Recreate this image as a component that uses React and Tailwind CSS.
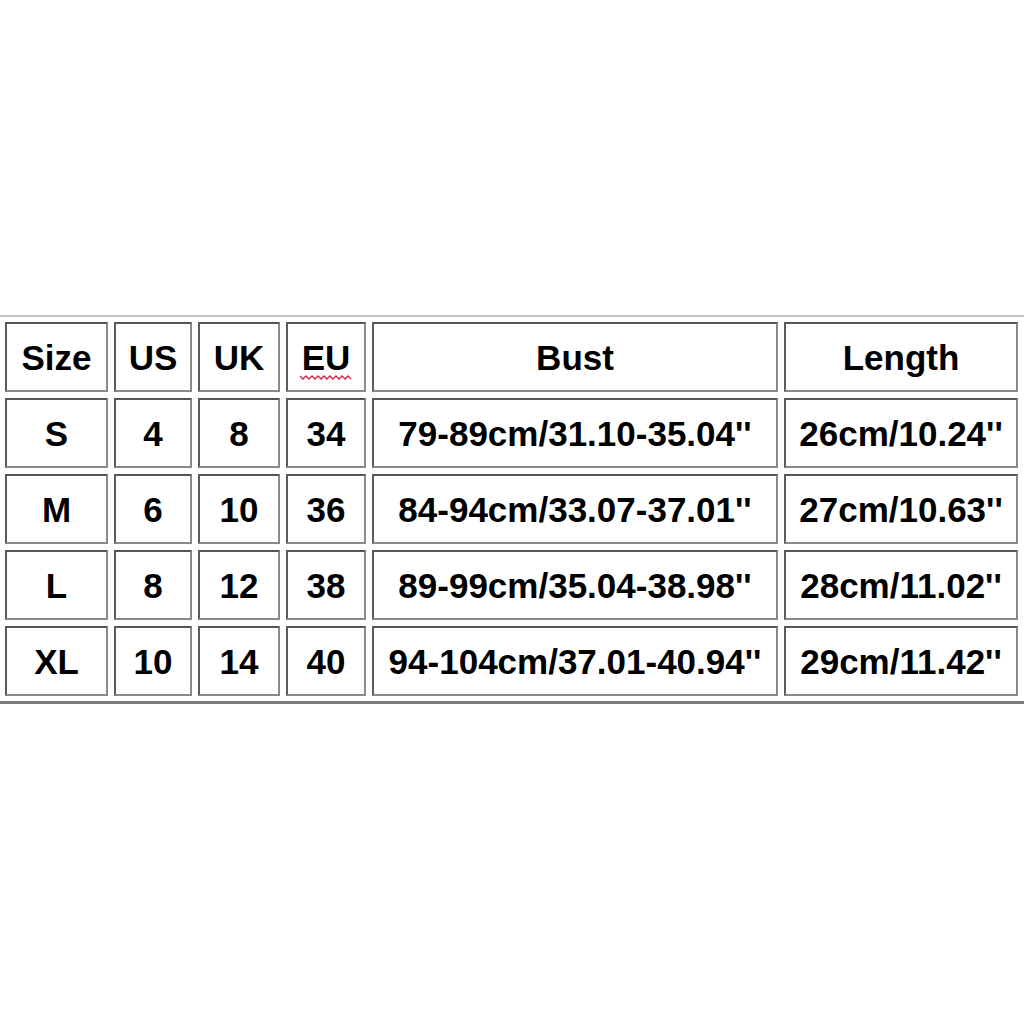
const header = ['Size', 'US', 'UK', 'EU', 'Bust', 'Length'];

const rows = [
  ['S', '4', '8', '34', "79-89cm/31.10-35.04''", "26cm/10.24''"],
  ['M', '6', '10', '36', "84-94cm/33.07-37.01''", "27cm/10.63''"],
  ['L', '8', '12', '38', "89-99cm/35.04-38.98''", "28cm/11.02''"],
  ['XL', '10', '14', '40', "94-104cm/37.01-40.94''", "29cm/11.42''"],
];

function Cell({ children }) {
  return (
    <div className="h-[70px] flex items-center justify-center border-2 border-t-[#555] border-l-[#5c5c5c] border-r-[#8a8a8a] border-b-[#8a8a8a] bg-white text-[35px] font-bold text-black leading-none whitespace-nowrap">
      {children}
    </div>
  );
}

function EU() {
  return (
    <span className="relative inline-block">
      EU
      <svg className="absolute left-[-2px] top-[34px]" width="52" height="7" viewBox="0 0 52 7">
        <path
          d="M0 2 L3 5 L6 2 L9 5 L12 2 L15 5 L18 2 L21 5 L24 2 L27 5 L30 2 L33 5 L36 2 L39 5 L42 2 L45 5 L48 2 L51 5"
          fill="none"
          stroke="#d0204a"
          strokeWidth="1.4"
        />
      </svg>
    </span>
  );
}

export default function App() {
  return (
    <div className="w-[1024px] h-[1024px] bg-white pt-[315px]" style={{ fontFamily: '"Liberation Sans", Arial, sans-serif' }}>
      <div className="border-t-2 border-t-[#c4c4c4] border-b-[3px] border-b-[#7a7a7a] pl-[5px] pt-[5px] pb-[5px]">
        <div className="grid grid-cols-[103px_78px_82px_80px_406px_234px] gap-[6px]">
          {header.map((h) => (
            <Cell key={h}>{h === 'EU' ? <EU /> : h}</Cell>
          ))}
          {rows.map((r) => r.map((c, i) => <Cell key={r[0] + i}>{c}</Cell>))}
        </div>
      </div>
    </div>
  );
}
